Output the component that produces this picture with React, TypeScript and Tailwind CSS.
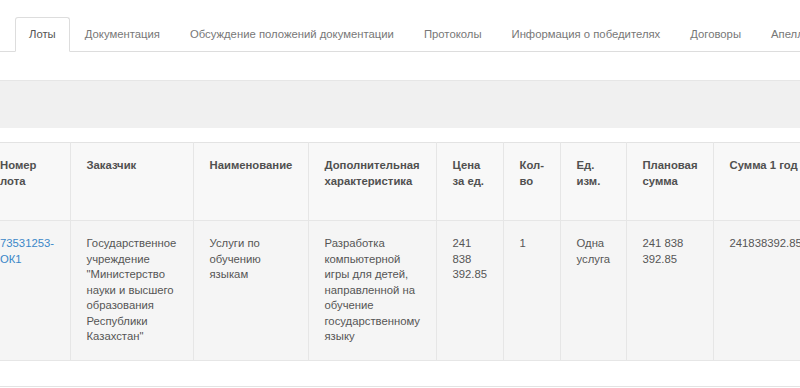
import React from 'react'

const TABS = [
  'Лоты',
  'Документация',
  'Обсуждение положений документации',
  'Протоколы',
  'Информация о победителях',
  'Договоры',
  'Апелляции',
]

const COLS = [
  { title: 'Номер лота', w: 'w-[86px]' },
  { title: 'Заказчик', w: 'w-[123px]' },
  { title: 'Наименование', w: 'w-[115px]' },
  { title: 'Дополнительная характеристика', w: 'w-[128px]' },
  { title: 'Цена за ед.', w: 'w-[67px]' },
  { title: 'Кол-во', w: 'w-[57px]' },
  { title: 'Ед. изм.', w: 'w-[66px]' },
  { title: 'Плановая сумма', w: 'w-[87px]' },
  { title: 'Сумма 1 год', w: 'w-[140px]' },
]

const ROW = [
  '',
  'Государственное учреждение "Министерство науки и высшего образования Республики Казахстан"',
  'Услуги по обучению языкам',
  'Разработка компьютерной игры для детей, направленной на обучение государственному языку',
  '241 838 392.85',
  '1',
  'Одна услуга',
  '241 838 392.85',
  '241838392.85',
]

export default function App() {
  return (
    <div className="w-[800px] h-[388px] overflow-hidden bg-white font-['Liberation_Sans',Arial,sans-serif] text-[11.3px] text-[#555]">
      <ul className="mt-[17px] flex border-b border-[#ddd] pl-[15px] whitespace-nowrap">
        {TABS.map((t, i) => (
          <li
            key={t}
            className={
              i === 0
                ? '-mb-px h-[35px] flex items-center border border-[#ddd] border-b-white bg-white rounded-t-[3px] px-[13px] text-[#555]'
                : '-mb-px h-[35px] flex items-center border border-transparent px-[14px] text-[#777]'
            }
          >
            {t}
          </li>
        ))}
      </ul>

      <div className="mt-[28px] h-[48px] border-t border-[#e6e6e6] bg-[#f0f0f0]" />

      <div className="mt-[14px] -ml-[16px]">
        <table className="table-fixed border-collapse w-[869px]">
          <thead>
            <tr className="bg-[#f8f8f8] border-t border-[#e3e3e3]">
              {COLS.map((c, i) => (
                <th
                  key={c.title}
                  className={`${c.w} h-[78px] align-top text-left font-bold text-[#505050] leading-[16px] pt-[14px] px-[16px] ${i > 0 ? 'border-l border-[#e6e6e6]' : ''}`}
                >
                  {c.title}
                </th>
              ))}
            </tr>
          </thead>
          <tbody>
            <tr className="bg-[#f5f5f5] border-t border-b border-[#e6e6e6]">
              {ROW.map((v, i) => (
                <td
                  key={i}
                  className={`h-[139px] align-top leading-[15.5px] pt-[15px] pb-[15px] px-[16px] ${i > 0 ? 'border-l border-[#e6e6e6]' : ''}`}
                >
                  {i === 0 ? (
                    <a href="#" className="text-[#3a87c8]">73531253-ОК1</a>
                  ) : (
                    v
                  )}
                </td>
              ))}
            </tr>
          </tbody>
        </table>
      </div>

      <div className="mt-[25px] border-t border-[#e3e3e3]" />
    </div>
  )
}
